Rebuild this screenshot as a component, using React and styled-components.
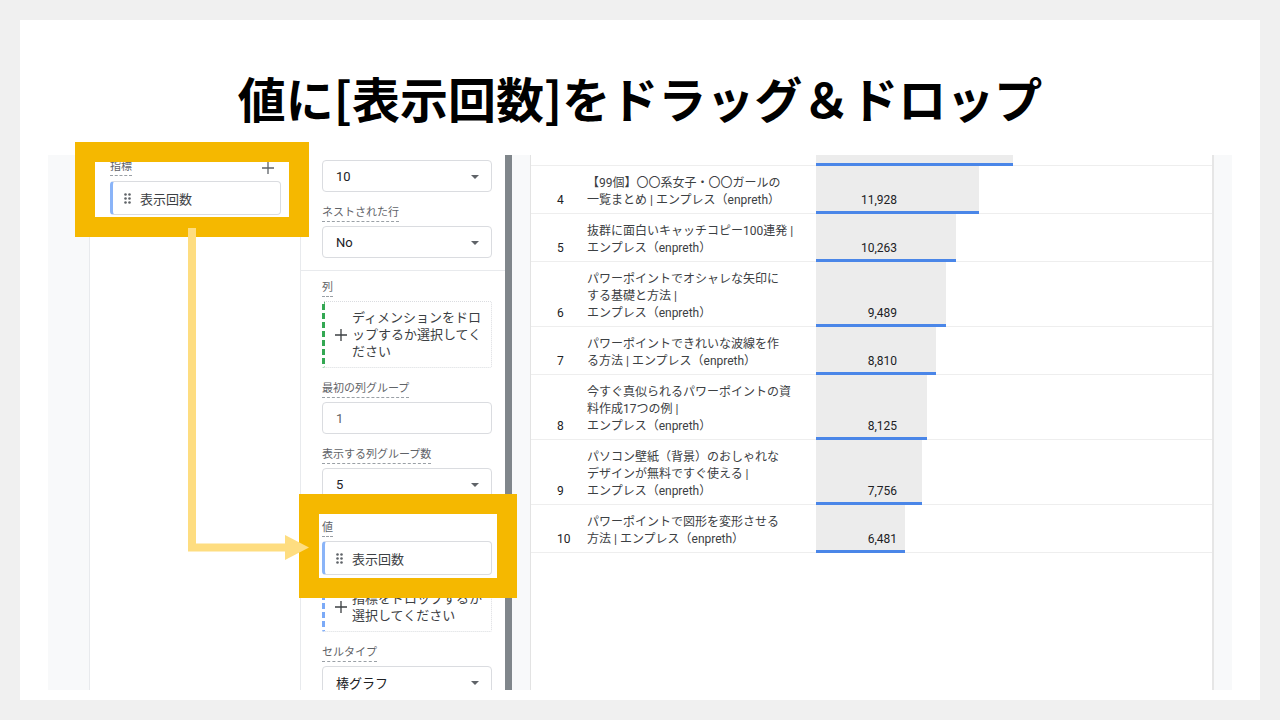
import React from 'react';
import styled, { createGlobalStyle } from 'styled-components';

const GlobalStyle = createGlobalStyle`
  html, body { margin: 0; padding: 0; background: #f0f0f0; }
  body { font-family: Roboto, "Noto Sans CJK JP", sans-serif; }
  * { box-sizing: border-box; }
`;

const Page = styled.div`
  width: 1280px;
  height: 720px;
  padding: 20px;
`;

const Slide = styled.div`
  position: relative;
  width: 1240px;
  height: 680px;
  background: #ffffff;
  display: flex;
  flex-direction: column;
  overflow: hidden;
`;

const Title = styled.h1`
  margin: 0;
  height: 135px;
  padding-top: 19px;
  display: flex;
  align-items: center;
  justify-content: center;
  font-family: "Noto Sans CJK JP", sans-serif;
  font-weight: 700;
  font-size: 48px;
  color: #000;
`;

const Stage = styled.div`
  margin-left: 28px;
  width: 1184px;
  height: 535px;
  display: flex;
  overflow: hidden;
  background: #fff;
`;

const LeftRail = styled.div`
  flex: none;
  width: 42px;
  background: #f8f9fa;
  border-right: 1px solid #e8eaed;
`;

const DataPanel = styled.div`
  flex: none;
  width: 211px;
  background: #fff;
  border-right: 1px solid #e8eaed;
  padding: 5px 19px 0 20px;
`;

const LabelRow = styled.div`
  display: flex;
  justify-content: space-between;
  align-items: center;
  padding-right: 7px;
  margin-bottom: 5px;
`;

const FieldLabel = styled.span`
  align-self: flex-start;
  display: inline-block;
  font-size: 11px;
  line-height: 14px;
  color: #5f6368;
  padding-bottom: 1px;
  border-bottom: 1px dashed #9aa0a6;
  margin-bottom: ${(p) => (p.$inline ? 0 : 4)}px;
`;

const PropertyPanel = styled.div`
  flex: none;
  width: 204px;
  background: #fff;
  display: flex;
  flex-direction: column;
`;

const Section = styled.div`
  display: flex;
  flex-direction: column;
  gap: 14px;
  padding: ${(p) => p.$top}px 13px ${(p) => p.$bottom}px 21px;
  border-bottom: ${(p) => (p.$divider ? '1px solid #e8eaed' : 'none')};
`;

const FieldBox = styled.div`
  display: flex;
  flex-direction: column;
`;

const Select = styled.div`
  position: relative;
  height: 32px;
  border: 1px solid #dadce0;
  border-radius: 4px;
  padding: 0 12px 0 13px;
  display: flex;
  align-items: center;
  font-size: 13px;
  color: ${(p) => (p.$muted ? '#5f6368' : '#202124')};
  &::after {
    content: ${(p) => (p.$caret ? "''" : 'none')};
    position: absolute;
    right: 12px;
    top: 14px;
    border-left: 4px solid transparent;
    border-right: 4px solid transparent;
    border-top: 4px solid #5f6368;
  }
`;

const DropZone = styled.div`
  display: flex;
  align-items: center;
  gap: 5px;
  padding: 7px 6px 7px 10px;
  border: 1px dotted #dadce0;
  border-left: 3px dashed ${(p) => p.$accent};
  border-radius: 2px;
  margin-top: ${(p) => p.$offset || 0}px;
  font-size: 13px;
  line-height: 17px;
  color: #3c4043;
`;

const DropText = styled.div`
  white-space: nowrap;
`;

const Chip = styled.div`
  height: 34px;
  border: 1px solid #dadce0;
  border-left: 3px solid #8ab4f8;
  border-radius: 4px;
  padding-left: 11px;
  display: flex;
  align-items: center;
  gap: 9px;
  font-size: 13px;
  color: #3c4043;
`;

const Gutter = styled.div`
  flex: none;
  width: 26px;
  background: #f8f9fa;
  border-left: 7px solid #80868b;
  border-right: 1px solid #e3e3e3;
`;

const Table = styled.div`
  flex: 1;
  background: #fff;
  display: flex;
  flex-direction: column;
`;

const RightEdge = styled.div`
  flex: none;
  width: 20px;
  background: #f8f9fa;
  border-left: 2px solid #e6e6e6;
`;

const Row = styled.div`
  display: grid;
  grid-template-columns: 56px 229px 1fr;
  border-bottom: 1px solid #eeeeee;
  font-size: 12px;
  line-height: 17px;
`;

const CutRow = styled(Row)`
  height: 11px;
`;

const NumCell = styled.div`
  padding: 9px 0 4px 26px;
  display: flex;
  align-items: flex-end;
  color: #202124;
`;

const TitleCell = styled.div`
  padding: 9px 0 4px;
  color: #3c4043;
  white-space: nowrap;
`;

const BarCell = styled.div`
  position: relative;
  display: flex;
  align-items: flex-end;
  padding-bottom: 4px;
`;

const Bar = styled.div`
  position: absolute;
  left: 0;
  top: 0;
  bottom: -1px;
  background: #ececec;
  border-bottom: 3px solid #4a86e8;
`;

const Value = styled.div`
  position: relative;
  width: 81px;
  text-align: right;
  color: #202124;
`;

const Frame = styled.div`
  position: absolute;
  left: ${(p) => p.$x}px;
  top: ${(p) => p.$y}px;
  width: ${(p) => p.$w}px;
  height: ${(p) => p.$h}px;
  border: 20px solid #f5b800;
  pointer-events: none;
`;

const ArrowLayer = styled.svg`
  position: absolute;
  left: 160px;
  top: 205px;
  overflow: visible;
`;

const Handle = () => (
  <svg width="7" height="11" viewBox="0 0 7 11">
    {[1.5, 5.5].map((x) =>
      [1.5, 5.5, 9.5].map((y) => <circle key={`${x}-${y}`} cx={x} cy={y} r="1.3" fill="#5f6368" />)
    )}
  </svg>
);

const Plus = ({ color = '#5f6368' }) => (
  <svg width="12" height="12" viewBox="0 0 12 12" style={{ flex: 'none' }}>
    <path d="M6 0V12M0 6H12" stroke={color} strokeWidth="1.3" />
  </svg>
);

const Field = ({ label, children }) => (
  <FieldBox>
    <FieldLabel>{label}</FieldLabel>
    {children}
  </FieldBox>
);

const SCALE = 163 / 11928;

const rows = [
  { n: 4, lines: ['【99個】〇〇系女子・〇〇ガールの', '一覧まとめ | エンプレス（enpreth）'], v: 11928 },
  { n: 5, lines: ['抜群に面白いキャッチコピー100連発 |', 'エンプレス（enpreth）'], v: 10263 },
  { n: 6, lines: ['パワーポイントでオシャレな矢印に', 'する基礎と方法 |', 'エンプレス（enpreth）'], v: 9489 },
  { n: 7, lines: ['パワーポイントできれいな波線を作', 'る方法 | エンプレス（enpreth）'], v: 8810 },
  { n: 8, lines: ['今すぐ真似られるパワーポイントの資', '料作成17つの例 |', 'エンプレス（enpreth）'], v: 8125 },
  { n: 9, lines: ['パソコン壁紙（背景）のおしゃれな', 'デザインが無料ですぐ使える |', 'エンプレス（enpreth）'], v: 7756 },
  { n: 10, lines: ['パワーポイントで図形を変形させる', '方法 | エンプレス（enpreth）'], v: 6481 },
];

export default function App() {
  return (
    <Page>
      <GlobalStyle />
      <Slide>
        <Title>値に[表示回数]をドラッグ＆ドロップ</Title>
        <Stage>
          <LeftRail />
          <DataPanel>
            <LabelRow>
              <FieldLabel $inline>指標</FieldLabel>
              <Plus />
            </LabelRow>
            <Chip>
              <Handle />
              表示回数
            </Chip>
          </DataPanel>
          <PropertyPanel>
            <Section $top={5} $bottom={12} $divider>
              <Select $caret>10</Select>
              <Field label="ネストされた行">
                <Select $caret>No</Select>
              </Field>
            </Section>
            <Section $top={10} $bottom={11} $divider>
              <Field label="列">
                <DropZone $accent="#34a853">
                  <Plus color="#3c4043" />
                  <DropText>
                    ディメンションをドロ
                    <br />
                    ップするか選択してく
                    <br />
                    ださい
                  </DropText>
                </DropZone>
              </Field>
              <Field label="最初の列グループ">
                <Select $muted>1</Select>
              </Field>
              <Field label="表示する列グループ数">
                <Select $caret>5</Select>
              </Field>
            </Section>
            <Section $top={9} $bottom={0}>
              <Field label="値">
                <Chip>
                  <Handle />
                  表示回数
                </Chip>
                <DropZone $accent="#7baaf7" $offset={7}>
                  <Plus color="#3c4043" />
                  <DropText>
                    指標をドロップするか
                    <br />
                    選択してください
                  </DropText>
                </DropZone>
              </Field>
              <Field label="セルタイプ">
                <Select $caret>棒グラフ</Select>
              </Field>
            </Section>
          </PropertyPanel>
          <Gutter />
          <Table>
            <CutRow>
              <span />
              <span />
              <BarCell>
                <Bar style={{ width: Math.round(14414 * SCALE) }} />
              </BarCell>
            </CutRow>
            {rows.map((r) => (
              <Row key={r.n}>
                <NumCell>{r.n}</NumCell>
                <TitleCell>
                  {r.lines.map((l, i) => (
                    <div key={i}>{l}</div>
                  ))}
                </TitleCell>
                <BarCell>
                  <Bar style={{ width: Math.round(r.v * SCALE) }} />
                  <Value>{r.v.toLocaleString('en-US')}</Value>
                </BarCell>
              </Row>
            ))}
          </Table>
          <RightEdge />
        </Stage>
        <Frame $x={55} $y={122} $w={234} $h={95} />
        <Frame $x={279} $y={474} $w={218} $h={104} />
        <ArrowLayer width="135" height="340" viewBox="0 0 135 340">
          <path d="M12 3V322.5H107" fill="none" stroke="#fedd80" strokeWidth="8" />
          <polygon points="105,310 129,322.5 105,335" fill="#fedd80" />
        </ArrowLayer>
      </Slide>
    </Page>
  );
}
